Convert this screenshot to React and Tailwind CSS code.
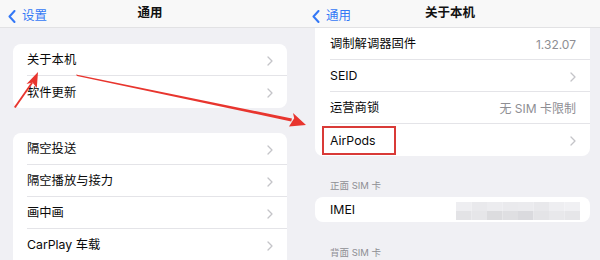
import React from "react";

const FONT = { fontFamily: 'Inter, "Noto Sans CJK SC", "Noto Sans", sans-serif' };

function Chevron() {
  return (
    <svg width="6" height="10" viewBox="0 0 6 10" className="shrink-0">
      <path d="M1 1 L5 5 L1 9" fill="none" stroke="#c4c4c8" strokeWidth="1.3" strokeLinecap="round" strokeLinejoin="round" />
    </svg>
  );
}

function Back({ label }) {
  return (
    <div className="flex items-center gap-[6px] text-[#3478f6] text-[12.5px]">
      <svg width="8" height="13" viewBox="0 0 8 13">
        <path d="M6.5 1 L1.5 6.5 L6.5 12" fill="none" stroke="#3478f6" strokeWidth="2" strokeLinecap="round" strokeLinejoin="round" />
      </svg>
      <span>{label}</span>
    </div>
  );
}

function Row({ label, value, chevron = true, last = false, pl = "pl-[14px]", children }) {
  return (
    <div className={`${pl} h-[32px] flex items-stretch`}>
      <div className={`flex-1 flex items-center justify-between pr-[14px] pt-[2px] ${last ? "" : "border-b border-[#e4e4e8]"}`}>
        <span className="text-[12.3px] text-[#0a0a0a]">{children || label}</span>
        <div className="flex items-center gap-[6px]">
          {value && <span className="text-[12px] text-[#8e8e93]">{value}</span>}
          {chevron && <Chevron />}
        </div>
      </div>
    </div>
  );
}

function Pixelated() {
  const cells = [
    ["#eeeef1", "#e9e9ec", "#ececef", "#eaeaed", "#ebebee", "#e8e8eb", "#eeeef1", "#f0f0f3"],
    ["#e3e3e6", "#e6e6e9", "#dcdcdf", "#dfdfe2", "#dadade", "#e4e4e7", "#e8e8eb", "#e6e6e9"],
  ];
  return (
    <svg width="124" height="18" viewBox="0 0 124 18">
      {cells.map((row, r) =>
        row.map((c, i) => <rect key={`${r}-${i}`} x={i * 15.5} y={r * 9} width="15.5" height="9" fill={c} />)
      )}
    </svg>
  );
}

export default function App() {
  return (
    <div className="relative w-[600px] h-[260px] overflow-hidden bg-[#f0f0f4] flex" style={FONT}>
      {/* Left panel */}
      <div className="w-[300px] h-full flex flex-col">
        <div className="h-[28px] shrink-0 bg-[#f8f8f8] border-b border-[#e2e2e4] relative flex items-center justify-center">
          <div className="absolute left-[8px] top-[7px]">
            <Back label="设置" />
          </div>
          <span className="text-[12.5px] font-semibold text-[#111]">通用</span>
        </div>
        <div className="mt-[16px] ml-[13px] w-[274px] bg-white rounded-[8px]">
          <Row label="关于本机" />
          <Row label="软件更新" last />
        </div>
        <div className="mt-[25px] ml-[13px] w-[274px] bg-white rounded-t-[8px]">
          <Row label="隔空投送" />
          <Row label="隔空播放与接力" />
          <Row label="画中画" />
          <Row label="CarPlay 车载" />
        </div>
      </div>

      {/* Right panel */}
      <div className="w-[300px] h-full flex flex-col">
        <div className="h-[28px] shrink-0 bg-[#f8f8f8] border-b border-[#e2e2e4] relative flex items-center justify-center">
          <div className="absolute left-[12px] top-[7px]">
            <Back label="通用" />
          </div>
          <span className="text-[12.5px] font-semibold text-[#111]">关于本机</span>
        </div>
        <div className="ml-[15px] w-[275px] bg-white rounded-b-[8px]">
          <Row label="调制解调器固件" value="1.32.07" chevron={false} pl="pl-[15px]" />
          <Row label="SEID" pl="pl-[15px]" />
          <Row label="运营商锁" value="无 SIM 卡限制" chevron={false} pl="pl-[15px]" />
          <Row pl="pl-[15px]" last>
            <span className="relative">
              AirPods
              <span className="absolute left-[-8px] right-[-20px] top-[-7px] bottom-[-7px] border-2 border-[#d93a37]" />
            </span>
          </Row>
        </div>
        <div className="ml-[30px] mt-[23px] text-[9.5px] text-[#8e8e93]">正面 SIM 卡</div>
        <div className="ml-[15px] mt-[4px] w-[275px] h-[31px] bg-white rounded-[8px] flex items-center justify-between pl-[15px] pr-[10px] pt-[2px]">
          <span className="text-[12.3px] text-[#0a0a0a]">IMEI</span>
          <Pixelated />
        </div>
        <div className="ml-[30px] mt-[24px] text-[9.5px] text-[#8e8e93]">背面 SIM 卡</div>
      </div>

      {/* Annotation arrows */}
      <svg className="absolute inset-0 pointer-events-none" width="600" height="260" viewBox="0 0 600 260">
        <path d="M76 74.6 L292 118.5 L291.2 121.5 L77 76 Z" fill="#e8352e" />
        <polygon points="306,125 289,126.5 294.2,118.2 293,113" fill="#e8352e" />
        <path d="M14 107 L31.5 82 L33 83 L15.6 108 Z" fill="#e8352e" />
        <polygon points="38,72 36.8,88 32.5,82.5 26.5,84" fill="#e8352e" />
      </svg>
    </div>
  );
}
